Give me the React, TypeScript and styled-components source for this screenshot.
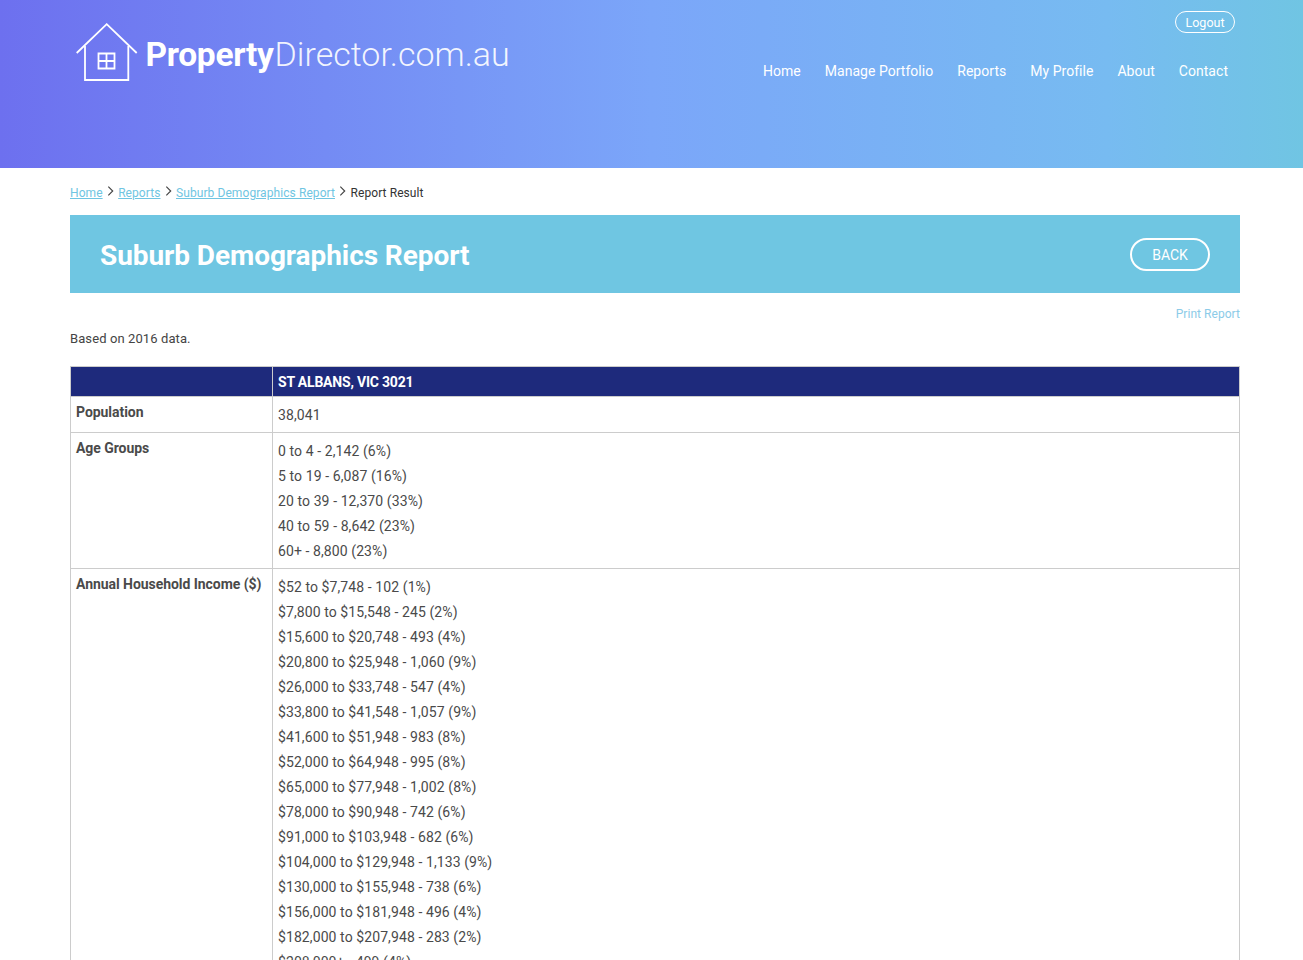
import React from "react";
import styled, { createGlobalStyle } from "styled-components";

const GlobalStyle = createGlobalStyle`
  html, body {
    margin: 0;
    padding: 0;
    background: #fff;
    font-family: Roboto, "Liberation Sans", sans-serif;
    color: #444;
  }
`;

const Header = styled.header`
  height: 168px;
  background: linear-gradient(90deg, #6d70ef 0%, #7ba6f9 50%, #77bbf1 85%, #70c5e3 100%);
  display: flex;
  justify-content: space-between;
  padding: 0 68px 0 75px;
  box-sizing: border-box;
`;

const Logo = styled.a`
  display: flex;
  align-items: flex-start;
  height: 82px;
  padding-top: 23px;
  box-sizing: border-box;
  color: #fff;
  font-size: 34px;
  gap: 7.5px;
`;

const LogoText = styled.span`
  font-weight: 300;
  line-height: 62px;
  color: rgba(255, 255, 255, 0.92);
  b {
    font-size: 33.5px;
    font-weight: 700;
    color: #fff;
    letter-spacing: -0.3px;
    margin-right: 1px;
  }
`;

const HeaderRight = styled.div`
  display: flex;
  flex-direction: column;
  align-items: flex-end;
`;

const LogoutButton = styled.a`
  margin-top: 11px;
  height: 22px;
  width: 60px;
  box-sizing: border-box;
  border: 1px solid #fff;
  border-radius: 11px;
  color: #fff;
  font-size: 12.5px;
  line-height: 21px;
  text-align: center;
`;

const Nav = styled.nav`
  display: flex;
  gap: 24px;
  margin-top: 29px;
  padding-right: 7px;
`;

const NavLink = styled.a`
  color: #fff;
  font-size: 14px;
  line-height: 18px;
  letter-spacing: 0.03px;
`;

const Main = styled.main`
  width: 1170px;
  margin-left: 70px;
`;

const Breadcrumbs = styled.div`
  display: flex;
  align-items: center;
  height: 47px;
  box-sizing: border-box;
  padding-top: 2px;
  font-size: 12px;
  letter-spacing: 0.08px;
  color: #333;
`;

const Crumb = styled.a`
  color: #6fc5e2;
  text-decoration: underline;
`;

const Chevron = styled.svg`
  width: 15.5px;
  height: 12px;
  margin-top: -3px;
`;

const TitleBar = styled.div`
  height: 78px;
  background: #6fc6e2;
  display: flex;
  align-items: center;
  justify-content: space-between;
  padding: 0 30px;
`;

const Title = styled.h1`
  margin: 2px 0 0;
  color: #fff;
  font-size: 28px;
  font-weight: 700;
  letter-spacing: -0.07px;
`;

const BackButton = styled.a`
  width: 80px;
  height: 33px;
  box-sizing: border-box;
  border: 2px solid #fff;
  border-radius: 17px;
  color: #fff;
  font-size: 14px;
  line-height: 30px;
  text-align: center;
`;

const PrintRow = styled.div`
  display: flex;
  justify-content: flex-end;
  margin-top: 14px;
  font-size: 12px;
  line-height: 14px;
  letter-spacing: 0.05px;
`;

const PrintLink = styled.a`
  color: #8ccbe8;
`;

const Note = styled.p`
  margin: 10px 0 19px;
  font-size: 13px;
  line-height: 16px;
  letter-spacing: 0.1px;
  color: #444;
`;

const Table = styled.table`
  width: 100%;
  border-collapse: collapse;
  table-layout: fixed;
`;

const HeadCell = styled.th`
  background: #1e2a7c;
  border: 1px solid #ccc;
  height: 29px;
  padding: 0 5px;
  color: #fff;
  font-size: 14px;
  font-weight: 700;
  text-align: left;
  letter-spacing: -0.2px;
  &:first-child {
    width: 191px;
  }
`;

const LabelCell = styled.td`
  border: 1px solid #ccc;
  padding: 6px 5px;
  vertical-align: top;
  font-size: 14px;
  line-height: 18px;
  font-weight: 700;
  letter-spacing: -0.05px;
  color: #4a4a4a;
`;

const ValueCell = styled.td`
  border: 1px solid #ccc;
  padding: 6px 5px 4px;
  vertical-align: top;
  font-size: 14px;
  letter-spacing: 0.09px;
  color: #4a4a4a;
`;

const ValueLine = styled.div`
  height: 25px;
  line-height: 25px;
`;

const rows: { label: string; values: string[] }[] = [
  { label: "Population", values: ["38,041"] },
  {
    label: "Age Groups",
    values: [
      "0 to 4 - 2,142 (6%)",
      "5 to 19 - 6,087 (16%)",
      "20 to 39 - 12,370 (33%)",
      "40 to 59 - 8,642 (23%)",
      "60+ - 8,800 (23%)",
    ],
  },
  {
    label: "Annual Household Income ($)",
    values: [
      "$52 to $7,748 - 102 (1%)",
      "$7,800 to $15,548 - 245 (2%)",
      "$15,600 to $20,748 - 493 (4%)",
      "$20,800 to $25,948 - 1,060 (9%)",
      "$26,000 to $33,748 - 547 (4%)",
      "$33,800 to $41,548 - 1,057 (9%)",
      "$41,600 to $51,948 - 983 (8%)",
      "$52,000 to $64,948 - 995 (8%)",
      "$65,000 to $77,948 - 1,002 (8%)",
      "$78,000 to $90,948 - 742 (6%)",
      "$91,000 to $103,948 - 682 (6%)",
      "$104,000 to $129,948 - 1,133 (9%)",
      "$130,000 to $155,948 - 738 (6%)",
      "$156,000 to $181,948 - 496 (4%)",
      "$182,000 to $207,948 - 283 (2%)",
      "$208,000+ - 499 (4%)",
    ],
  },
];

const navItems = ["Home", "Manage Portfolio", "Reports", "My Profile", "About", "Contact"];

const HouseIcon = () => (
  <svg width="63" height="60" viewBox="0 0 63 60" fill="none" stroke="#fff" strokeWidth="1.8">
    <path d="M1.7 30 L31.7 1.2 L61.7 30" />
    <path d="M10 23 V57 H53.3 V23" />
    <path d="M23.5 30.5 H39.5 V45.5 H23.5 Z M31.5 30.5 V45.5 M23.5 38 H39.5" />
  </svg>
);

const ChevronIcon = () => (
  <Chevron viewBox="0 0 16 12" fill="none" stroke="#444" strokeWidth="1.2">
    <path d="M5.5 1.5 L10 6 L5.5 10.5" />
  </Chevron>
);

export default function App() {
  return (
    <>
      <GlobalStyle />
      <Header>
        <Logo>
          <HouseIcon />
          <LogoText>
            <b>Property</b>Director.com.au
          </LogoText>
        </Logo>
        <HeaderRight>
          <LogoutButton>Logout</LogoutButton>
          <Nav>
            {navItems.map((item) => (
              <NavLink key={item}>{item}</NavLink>
            ))}
          </Nav>
        </HeaderRight>
      </Header>
      <Main>
        <Breadcrumbs>
          <Crumb>Home</Crumb>
          <ChevronIcon />
          <Crumb>Reports</Crumb>
          <ChevronIcon />
          <Crumb>Suburb Demographics Report</Crumb>
          <ChevronIcon />
          <span>Report Result</span>
        </Breadcrumbs>
        <TitleBar>
          <Title>Suburb Demographics Report</Title>
          <BackButton>BACK</BackButton>
        </TitleBar>
        <PrintRow>
          <PrintLink>Print Report</PrintLink>
        </PrintRow>
        <Note>Based on 2016 data.</Note>
        <Table>
          <thead>
            <tr>
              <HeadCell />
              <HeadCell>ST ALBANS, VIC 3021</HeadCell>
            </tr>
          </thead>
          <tbody>
            {rows.map((row) => (
              <tr key={row.label}>
                <LabelCell>{row.label}</LabelCell>
                <ValueCell>
                  {row.values.map((value) => (
                    <ValueLine key={value}>{value}</ValueLine>
                  ))}
                </ValueCell>
              </tr>
            ))}
          </tbody>
        </Table>
      </Main>
    </>
  );
}
